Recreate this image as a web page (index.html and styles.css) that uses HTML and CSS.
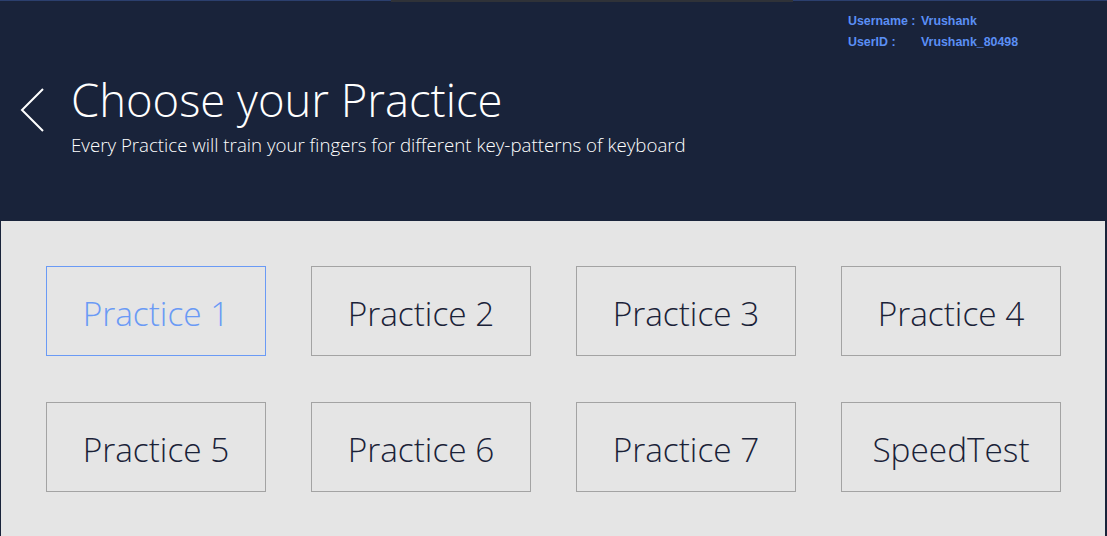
FILE: index.html
```html
<!DOCTYPE html>
<html>
<head>
<meta charset="utf-8">
<link rel="stylesheet" href="styles.css">
</head>
<body>
<div class="app">
  <header class="header">
    <div class="topline"><span class="topimg"></span></div>
    <div class="user">
      <div class="user-row"><span class="ulabel">Username :</span><span>Vrushank</span></div>
      <div class="user-row"><span class="ulabel">UserID :</span><span>Vrushank_80498</span></div>
    </div>
    <div class="titlebar">
      <svg class="back" width="26" height="44" viewBox="0 0 26 44"><path d="M23 1 L2 22 L23 43" fill="none" stroke="#ffffff" stroke-width="2"/></svg>
      <div class="titles">
        <h1 class="title">Choose your Practice</h1>
        <p class="subtitle">Every Practice will train your fingers for different key-patterns of keyboard</p>
      </div>
    </div>
  </header>
  <main class="panel">
    <div class="grid">
      <div class="card active">Practice 1</div>
      <div class="card">Practice 2</div>
      <div class="card">Practice 3</div>
      <div class="card">Practice 4</div>
      <div class="card">Practice 5</div>
      <div class="card">Practice 6</div>
      <div class="card">Practice 7</div>
      <div class="card">SpeedTest</div>
    </div>
  </main>
</div>
</body>
</html>
```
FILE: styles.css
```css
* { box-sizing: border-box; }
html, body { margin: 0; padding: 0; }
body { background: #19233a; width: 1107px; height: 536px; overflow: hidden; font-family: "Open Sans", "Noto Sans", sans-serif; }
.app { display: flex; flex-direction: column; height: 536px; }
.header { position: relative; height: 221px; background: #19233a; }
.topline { height: 1px; background: #2b3f6e; display: flex; }
.topimg { width: 402px; height: 2px; background: #2f3238; margin-left: 391px; }
.user { position: absolute; left: 848px; top: 14px; font-family: "Liberation Sans", Arial, sans-serif; font-weight: bold; font-size: 12.4px; color: #5b8ff5; }
.user-row { display: flex; height: 21px; line-height: 14px; }
.ulabel { width: 73px; }
.titlebar { display: flex; align-items: flex-start; padding: 68px 0 0 20px; }
.back { margin-top: 19px; margin-right: 25px; flex: none; }
.titles { color: #ffffff; }
.title { margin: 0; font-weight: 300; font-size: 45.4px; line-height: 60px; letter-spacing: 0; }
.subtitle { margin: 4px 0 0 0; font-weight: 300; font-size: 18.7px; line-height: 24px; }
.panel { flex: 1; background: #e5e5e5; margin: 0 2px 0 1px; padding: 45px 0 0 45px; }
.grid { display: grid; grid-template-columns: repeat(4, 220px); grid-auto-rows: 90px; column-gap: 45px; row-gap: 46px; }
.card { border: 1px solid #a3a3a3; display: flex; align-items: center; justify-content: center; font-weight: 300; font-size: 33.4px; color: #1a2238; padding-top: 4px; }
.card.active { border-color: #6a9af5; color: #6a9af5; }
```
